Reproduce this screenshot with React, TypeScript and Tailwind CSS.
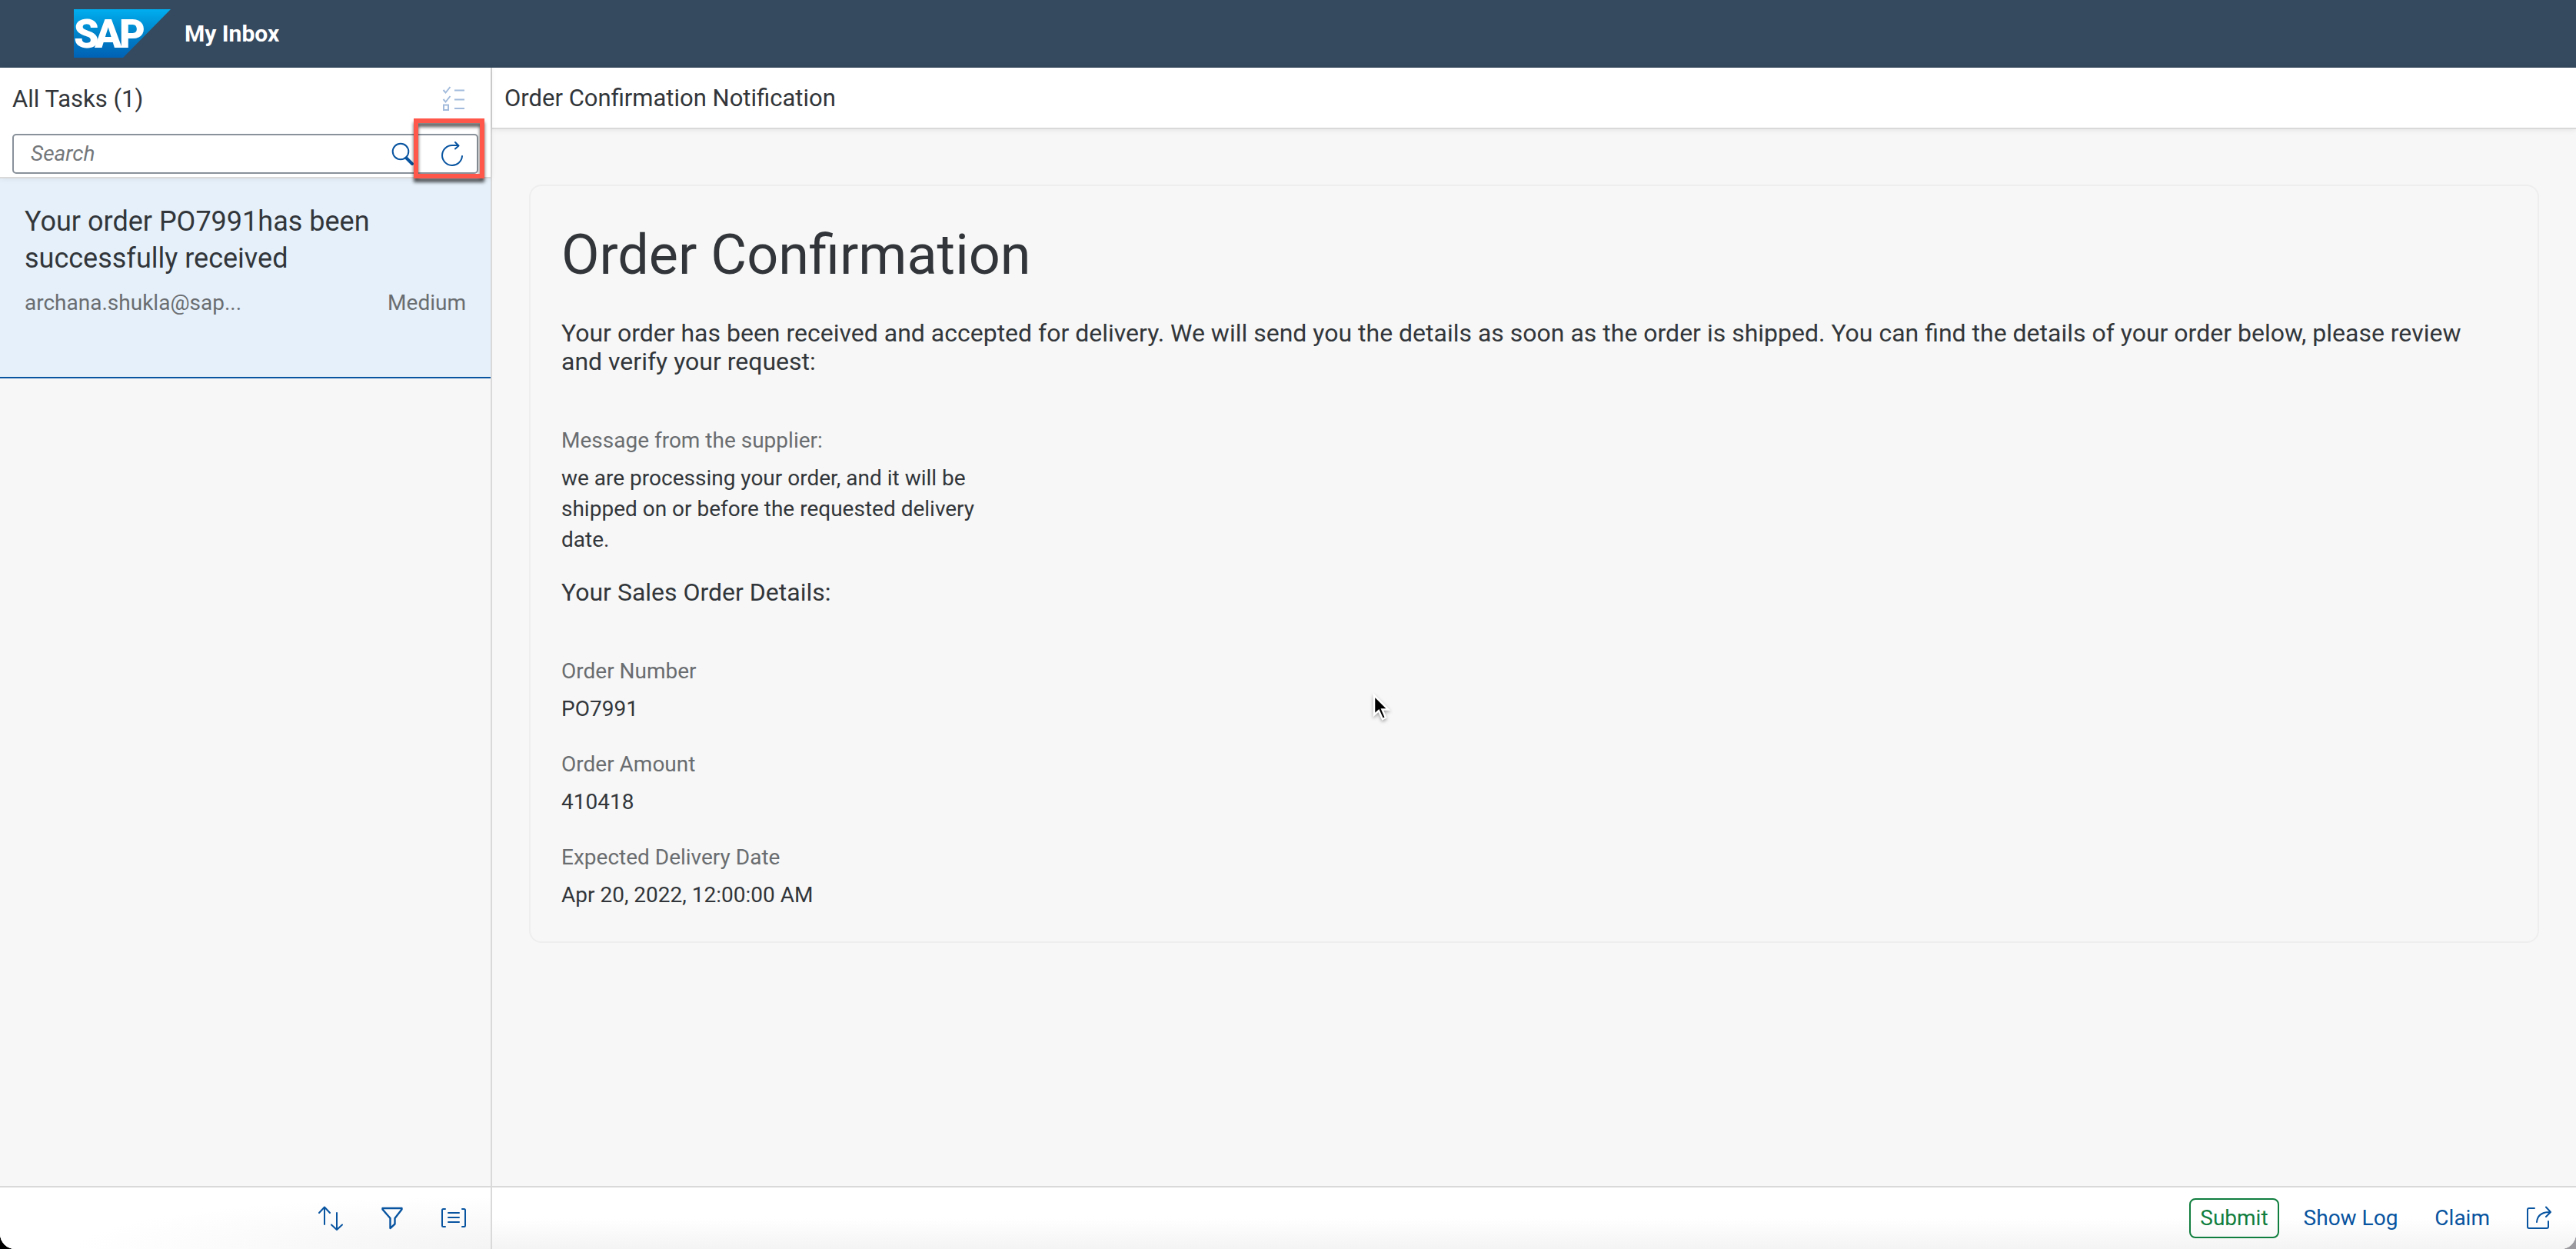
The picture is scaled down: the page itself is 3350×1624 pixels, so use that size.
import type { ReactNode } from 'react';

function Icon({ children }: { children: ReactNode }) {
  return (
    <svg
      width="32"
      height="32"
      viewBox="0 0 32 32"
      fill="none"
      stroke="currentColor"
      strokeWidth="2"
      strokeLinecap="round"
      strokeLinejoin="round"
      aria-hidden="true"
    >
      {children}
    </svg>
  );
}

function Logo() {
  return (
    <svg width="126" height="63" viewBox="0 0 126 63" role="img" aria-label="SAP">
      <defs>
        <linearGradient id="logo" x1="0" y1="0" x2="0" y2="1">
          <stop offset="0" stopColor="#00aeef" />
          <stop offset="0.5" stopColor="#0083ca" />
          <stop offset="1" stopColor="#0061b5" />
        </linearGradient>
      </defs>
      <path d="M0 0H126L64 63H0Z" fill="url(#logo)" />
      <g fill="#fff" fontFamily="Roboto" fontWeight="900" fontSize="52">
        <text x="0" y="50">S</text>
        <text x="27" y="50">A</text>
        <text x="59" y="50">P</text>
      </g>
    </svg>
  );
}

function ShellHeader() {
  return (
    <header className="flex h-[88px] shrink-0 items-center bg-[#354a5f] pb-px pl-24">
      <Logo />
      <h1 className="ml-[18px] text-[30px] font-bold text-white">My Inbox</h1>
    </header>
  );
}

function SearchBar() {
  return (
    <div className="mx-4 mt-[6px] flex h-[52px] items-center rounded-[5px] border-2 border-[#89919a] bg-white">
      <input
        type="text"
        aria-label="Search"
        placeholder="Search"
        className="h-full min-w-0 flex-1 bg-transparent pb-0.5 pl-[22px] text-[28px] text-[#32363a] outline-none placeholder:text-[#74777a] placeholder:italic"
      />
      <button type="button" aria-label="Start search" className="mr-8 text-[#0854a0]">
        <Icon>
          <circle cx="13" cy="13" r="10.3" />
          <path d="M20.5 21.5L28 29" strokeWidth="4" />
        </Icon>
      </button>
      <div className="relative mr-4">
        <button type="button" aria-label="Refresh" className="block text-[#0854a0]">
          <Icon>
            <path d="M29 19A13 13 0 1 1 16 5H24" />
            <path d="M20 1L24.500 5.500L20 9.500" />
          </Icon>
        </button>
        <div className="pointer-events-none absolute -top-[30px] -left-[34px] h-[78px] w-[92px] border-6 border-[#ff584a] drop-shadow-[0_5px_2px_rgba(0,0,0,0.65)]" />
      </div>
    </div>
  );
}

function TaskList() {
  return (
    <aside className="flex w-[640px] shrink-0 flex-col border-r-2 border-[#d9d9d9] bg-[#f7f7f7]">
      <div className="relative z-10 h-36 border-b-2 border-[#d9d9d9] bg-white shadow-[0_0_8px_rgba(0,0,0,0.08)]">
        <div className="flex h-20 items-center justify-between pr-8 pl-4">
          <h2 className="pt-0.5 text-[31px] text-[#32363a]">All Tasks (1)</h2>
          <button type="button" aria-label="Multiple selection" disabled className="text-[#a2bbdc]">
            <Icon>
              <g strokeLinecap="butt" strokeLinejoin="miter">
                <path d="M2.500 5L5.500 8.500L11.500 1M2.500 17L5.500 20.500L11.500 13M17 5.500H30M17 17.500H30M17 29H30" />
                <path d="M3 24.500H9V31H3Z" />
              </g>
            </Icon>
          </button>
        </div>
        <SearchBar />
      </div>
      <ul className="flex-1">
        <li>
          <a href="#task" className="block h-[260px] border-b-2 border-[#0854a0] bg-[#e5f0fa] px-8 pt-8">
            <span className="block max-w-[520px] text-[36px] leading-[48px] text-[#32363a]">
              Your order PO7991has been successfully received
            </span>
            <span className="mt-[18px] flex justify-between text-[28px] leading-8 text-[#6a6d70]">
              <span>archana.shukla@sap...</span>
              <span>Medium</span>
            </span>
          </a>
        </li>
      </ul>
      <div className="flex h-[82px] items-center justify-end gap-12 border-t-2 border-[#d9d9d9] bg-[radial-gradient(ellipse_at_bottom_right,#f4f4f4,white_60%)] pr-8 text-[#0854a0]">
        <button type="button" aria-label="Sort">
          <Icon>
            <path d="M8 24V2M1 9L8 1.500L15 9M24 9V31M17 24.500L24 31L31 24.500" />
          </Icon>
        </button>
        <button type="button" aria-label="Filter">
          <Icon>
            <path d="M3.500 3H28.500V4.500L19.500 16V23.500L13.500 29V16L3.500 4.500Z" strokeWidth="2.400" />
          </Icon>
        </button>
        <button type="button" aria-label="Group">
          <Icon>
            <path d="M5 4H2.500Q1 4 1 5.500V25.500Q1 27 2.500 27H5M27 4H29.500Q31 4 31 5.500V25.500Q31 27 29.500 27H27M9 9H23M9 15H23M9 21H23" />
          </Icon>
        </button>
      </div>
    </aside>
  );
}

function Field({ label, value }: { label: string; value: string }) {
  return (
    <div className="text-[28px] leading-10">
      <dt className="text-[#6a6d70]">{label}</dt>
      <dd className="mt-[9px] max-w-[560px] text-[#32363a]">{value}</dd>
    </div>
  );
}

const orderFields = [
  { label: 'Order Number', value: 'PO7991' },
  { label: 'Order Amount', value: '410418' },
  { label: 'Expected Delivery Date', value: 'Apr 20, 2022, 12:00:00 AM' },
];

function TaskDetail() {
  return (
    <section className="flex min-w-0 flex-1 flex-col bg-[#f7f7f7] text-[#32363a]">
      <div className="flex h-20 items-center border-b-2 border-[#d9d9d9] bg-white px-4 shadow-[0_0_8px_rgba(0,0,0,0.1)]">
        <h2 className="pt-0.5 text-[31px]">Order Confirmation Notification</h2>
      </div>
      <main className="flex-1 px-12 pt-[72px]">
        <article className="rounded-2xl border-2 border-[#eeeeee] p-10">
          <h3 className="text-[72px] leading-[99px]">Order Confirmation</h3>
          <p className="mt-[34px] text-[32px] leading-[37px]">
            Your order has been received and accepted for delivery. We will send you the details as soon as the order is
            shipped. You can find the details of your order below, please review and verify your request:
          </p>
          <dl className="mt-16">
            <Field
              label="Message from the supplier:"
              value="we are processing your order, and it will be shipped on or before the requested delivery date."
            />
          </dl>
          <h4 className="mt-[30px] text-[32px] leading-[37px]">Your Sales Order Details:</h4>
          <dl className="mt-16 flex flex-col gap-8">
            {orderFields.map((f) => (
              <Field key={f.label} label={f.label} value={f.value} />
            ))}
          </dl>
        </article>
      </main>
      <footer className="flex h-[82px] items-center justify-end gap-4 border-t-2 border-[#d9d9d9] bg-linear-to-b from-white from-50% to-[#f4f4f4] px-4 text-[28px] text-[#0854a0]">
        <button type="button" className="h-[52px] rounded-lg border-2 border-[#107e3e] px-3 text-[#107e3e]">
          Submit
        </button>
        <button type="button" className="h-[52px] px-4">
          Show Log
        </button>
        <button type="button" className="h-[52px] px-4">
          Claim
        </button>
        <button type="button" aria-label="Share" className="h-[52px] px-4">
          <Icon>
            <path d="M10 3H3Q1 3 1 5V27Q1 29 3 29H26Q28 29 28 27V20M13 21Q14 8 30 8M25 1.500L31 8L25 14" />
          </Icon>
        </button>
      </footer>
    </section>
  );
}

function Pointer() {
  return (
    <svg
      className="pointer-events-none absolute top-[900px] left-[1784px] drop-shadow-[0_2px_2px_rgba(0,0,0,0.35)]"
      width="26"
      height="38"
      viewBox="0 0 26 38"
      aria-hidden="true"
    >
      <path d="M3 4V29.500L9 24L14 35L18 33L13.500 22.500H21.500Z" fill="#000" stroke="#fff" strokeWidth="2.500" />
    </svg>
  );
}

export default function App() {
  return (
    <div className="relative min-h-screen bg-linear-to-r from-black to-[#9b9b9f] font-['Roboto',sans-serif]">
      <div className="flex min-h-screen flex-col overflow-hidden rounded-b-[20px] bg-white">
        <ShellHeader />
        <div className="flex flex-1">
          <TaskList />
          <TaskDetail />
        </div>
      </div>
      <Pointer />
    </div>
  );
}
